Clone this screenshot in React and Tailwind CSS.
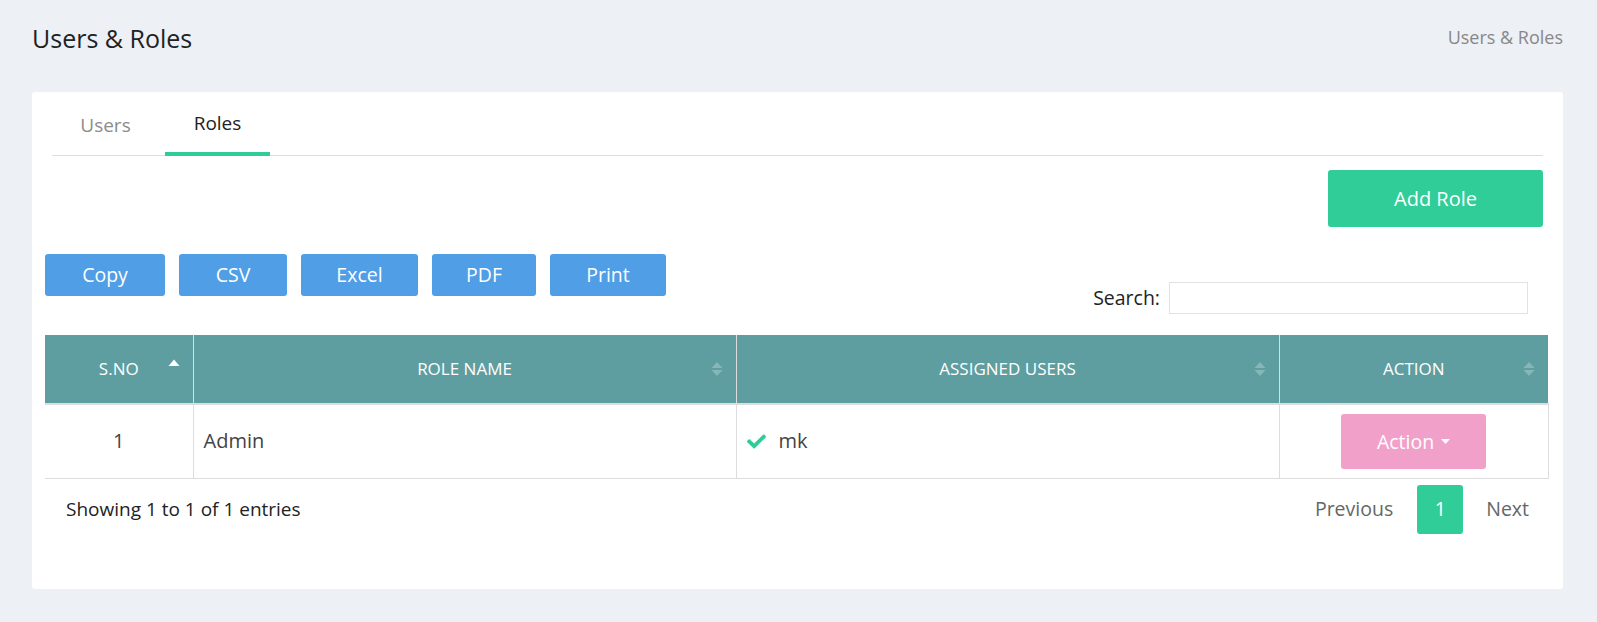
import React, { useState } from 'react';

const exportButtons = [
  { label: 'Copy', w: 'w-[120px]' },
  { label: 'CSV', w: 'w-[108px]' },
  { label: 'Excel', w: 'w-[117px]' },
  { label: 'PDF', w: 'w-[104px]' },
  { label: 'Print', w: 'w-[116px]' },
];

const roles = [{ id: 1, name: 'Admin', users: ['mk'] }];

function SortIcon() {
  return (
    <svg className="absolute right-[13px] top-1/2 -translate-y-1/2" width="12" height="16" viewBox="0 0 12 16">
      <path d="M6 1 L11.5 7 L0.5 7 Z" fill="#ffffff" fillOpacity="0.25" />
      <path d="M6 15 L11.5 9 L0.5 9 Z" fill="#ffffff" fillOpacity="0.25" />
    </svg>
  );
}

function SortAsc() {
  return (
    <svg className="absolute right-[13px] top-[24px]" width="12" height="8" viewBox="0 0 12 8">
      <path d="M6 0.5 L11.5 7 L0.5 7 Z" fill="#ffffff" />
    </svg>
  );
}

function Check() {
  return (
    <svg width="19" height="15" viewBox="0 0 512 400" className="shrink-0">
      <path
        fill="#2ecc99"
        d="M173.898 383.404l-166.4-166.4c-9.997-9.997-9.997-26.206 0-36.204l36.203-36.204c9.997-9.998 26.207-9.998 36.204 0L192 256.69 432.095 16.596c9.997-9.997 26.207-9.997 36.204 0l36.203 36.204c9.997 9.997 9.997 26.206 0 36.204l-294.4 294.401c-9.998 9.997-26.207 9.997-36.204-.001z"
      />
    </svg>
  );
}

export default function App() {
  const [tab, setTab] = useState('roles');
  const [search, setSearch] = useState('');

  return (
    <div className="min-h-screen bg-[#edf0f5] font-['Open_Sans',sans-serif] pb-[34px]">
      {/* Page header */}
      <div className="flex h-[92px] items-start justify-between pl-[32px] pr-[34px] pt-[21px]">
        <h1 className="text-[25px] leading-[34px] text-[#222]">Users &amp; Roles</h1>
        <div className="pt-[3px] text-[18px] leading-[26px] text-[#888]">Users &amp; Roles</div>
      </div>

      {/* Card */}
      <div className="ml-[32px] mr-[34px] rounded-[3px] bg-white px-5 pb-[55px]">
        {/* Tabs */}
        <div className="flex border-b border-[#dedede]">
          <button
            onClick={() => setTab('users')}
            className={`-mb-px flex h-[64px] w-[107px] items-center justify-center pt-[3px] text-[19px] ${
              tab === 'users' ? 'border-b-[4px] border-[#2ecc99] text-[#222]' : 'text-[#8c8c8c]'
            }`}
          >
            Users
          </button>
          <button
            onClick={() => setTab('roles')}
            className={`-mb-px ml-[6px] flex h-[64px] w-[105px] items-center justify-center pt-[3px] text-[19px] ${
              tab === 'roles' ? 'border-b-[4px] border-[#2ecc99] text-[#222]' : 'text-[#8c8c8c]'
            }`}
          >
            Roles
          </button>
        </div>

        {/* Add role */}
        <div className="mt-[14px] flex justify-end">
          <button className="h-[57px] w-[215px] rounded-[3px] bg-[#30cd99] text-[20px] text-white">Add Role</button>
        </div>

        {/* Export + search */}
        <div className="-ml-[7px] flex items-start justify-between pr-[15px]">
          <div className="mt-[27px] flex gap-[14px]">
            {exportButtons.map((b) => (
              <button
                key={b.label}
                className={`h-[42px] ${b.w} rounded-[3px] bg-[#4f9ee6] text-[19.5px] text-white`}
              >
                {b.label}
              </button>
            ))}
          </div>
          <label className="mt-[55px] flex items-center gap-[9px] text-[19.5px] text-[#222]">
            Search:
            <input
              value={search}
              onChange={(e) => setSearch(e.target.value)}
              className="h-[32px] w-[359px] border border-[#e2e2e2] px-2 text-[16px] outline-none"
            />
          </label>
        </div>

        {/* Table */}
        <div className="-ml-[7px] -mr-[5px] mt-[21px]">
          <table className="w-full table-fixed border-collapse">
            <colgroup>
              <col className="w-[148px]" />
              <col className="w-[543px]" />
              <col className="w-[543px]" />
              <col className="w-[269px]" />
            </colgroup>
            <thead>
              <tr className="bg-[#5f9ea0] text-[17px] uppercase text-white">
                <th className="relative h-[69px] border-b-2 border-r border-[#dddddd] font-normal">
                  S.NO
                  <SortAsc />
                </th>
                <th className="relative border-b-2 border-r border-[#dddddd] font-normal">
                  ROLE NAME
                  <SortIcon />
                </th>
                <th className="relative border-b-2 border-r border-[#dddddd] font-normal">
                  ASSIGNED USERS
                  <SortIcon />
                </th>
                <th className="relative border-b-2 border-[#dddddd] font-normal">
                  ACTION
                  <SortIcon />
                </th>
              </tr>
            </thead>
            <tbody className="text-[20px] text-[#444]">
              {roles.map((r) => (
                <tr key={r.id}>
                  <td className="h-[74px] border-b border-r border-[#dddddd] text-center">{r.id}</td>
                  <td className="border-b border-r border-[#dddddd] pl-[10px]">{r.name}</td>
                  <td className="border-b border-r border-[#dddddd] pl-[10px]">
                    {r.users.map((u) => (
                      <div key={u} className="flex items-center gap-[13px]">
                        <Check />
                        <span>{u}</span>
                      </div>
                    ))}
                  </td>
                  <td className="border-b border-r border-[#dddddd] text-center">
                    <button className="inline-flex h-[55px] w-[145px] items-center justify-center gap-[7px] rounded-[3px] bg-[#f1a1c9] text-[19.5px] text-white">
                      Action
                      <svg width="9" height="5" viewBox="0 0 9 5">
                        <path d="M0 0 L9 0 L4.5 5 Z" fill="#ffffff" />
                      </svg>
                    </button>
                  </td>
                </tr>
              ))}
            </tbody>
          </table>
        </div>

        {/* Footer */}
        <div className="mt-[6px] flex items-center justify-between pl-[14px] pr-[14px]">
          <div className="text-[19px] text-[#222]">Showing 1 to 1 of 1 entries</div>
          <div className="flex items-center text-[19.5px] text-[#666]">
            <span className="pr-[24px]">Previous</span>
            <span className="flex h-[49px] w-[46px] items-center justify-center rounded-[3px] bg-[#30cd99] text-white">
              1
            </span>
            <span className="pl-[23px]">Next</span>
          </div>
        </div>
      </div>
    </div>
  );
}
